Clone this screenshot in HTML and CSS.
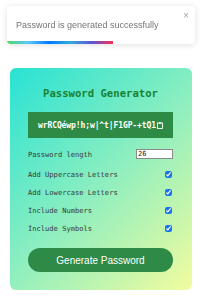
FILE: index.html
```html
<!DOCTYPE html>
<html>
<head>
<meta charset="utf-8">
<link rel="stylesheet" href="styles.css">
</head>
<body>
<div class="toast">
  <span class="toast-text">Password is generated successfully</span>
  <span class="toast-close">×</span>
  <div class="toast-progress"></div>
</div>
<main class="card">
  <h1 class="title">Password Generator</h1>
  <div class="pw-box">
    <span class="pw-text">wrRCQéwp!h;w|^t|F1GP-+tQ1</span>
    <svg class="clip" width="6" height="7" viewBox="0 0 6 7"><rect x="0.5" y="1" width="5" height="5.5" fill="none" stroke="#fff" stroke-width="0.9"/><rect x="1.8" y="0.3" width="2.4" height="1.4" fill="#fff"/></svg>
  </div>
  <div class="row row-first">
    <label class="label">Password length</label>
    <input class="num" type="text" value="26">
  </div>
  <div class="row">
    <label class="label">Add Uppercase Letters</label>
    <input class="check" type="checkbox" checked>
  </div>
  <div class="row">
    <label class="label">Add Lowercase Letters</label>
    <input class="check" type="checkbox" checked>
  </div>
  <div class="row">
    <label class="label">Include Numbers</label>
    <input class="check" type="checkbox" checked>
  </div>
  <div class="row">
    <label class="label">Include Symbols</label>
    <input class="check" type="checkbox" checked>
  </div>
  <button class="btn">Generate Password</button>
</main>
</body>
</html>
```
FILE: styles.css
```css
html, body {
  margin: 0;
  padding: 0;
  background: #fff;
}
body {
  width: 205px;
  height: 300px;
  overflow: hidden;
  font-family: "Liberation Sans", Arial, sans-serif;
}
.toast {
  position: fixed;
  top: 6px;
  left: 7px;
  width: 188px;
  height: 38px;
  background: #fff;
  border-radius: 4px;
  box-shadow: 0 1px 6px rgba(0,0,0,0.13);
  display: flex;
  align-items: center;
  overflow: hidden;
  z-index: 10;
}
.toast-text {
  margin-left: 9px;
  font-size: 9px;
  color: #757575;
  line-height: 11px;
}
.toast-close {
  position: absolute;
  top: 5px;
  right: 6px;
  font-size: 10px;
  line-height: 10px;
  color: #a8a8a8;
}
.toast-progress {
  position: absolute;
  left: 0;
  bottom: 0;
  width: 106px;
  height: 3px;
  background: linear-gradient(to right, #4cd964, #5ac8fa, #007aff, #34aadc, #5856d6, #ff2d55);
}
.card {
  margin: 68px 0 0 10px;
  width: 182px;
  height: 222px;
  box-sizing: border-box;
  padding: 19px 19px 0 18px;
  border-radius: 6px;
  background: linear-gradient(135deg, #28e2d4 0%, #8beec0 50%, #f2fc9f 100%);
  display: flex;
  flex-direction: column;
}
.title {
  margin: 0;
  text-align: center;
  font-family: "DejaVu Sans Mono", monospace;
  font-size: 10.6px;
  line-height: 13px;
  font-weight: bold;
  color: #1a8232;
}
.pw-box {
  margin-top: 12px;
  height: 26px;
  background: #2e8b45;
  display: flex;
  align-items: center;
  justify-content: center;
  gap: 1px;
}
.pw-text {
  font-family: "DejaVu Sans Mono", monospace;
  font-size: 8px;
  font-weight: bold;
  color: #fff;
  letter-spacing: -0.1px;
}
.clip {
  display: block;
}
.row {
  height: 18px;
  display: flex;
  align-items: center;
  justify-content: space-between;
}
.row-first {
  margin-top: 7px;
  margin-bottom: 2px;
}
.label {
  font-family: "DejaVu Sans Mono", monospace;
  font-size: 7.1px;
  color: #3a3a3a;
}
.num {
  width: 37px;
  height: 10px;
  box-sizing: border-box;
  margin: 0;
  padding: 0 1px;
  border: 1px solid #8a8a8a;
  font-family: "DejaVu Sans Mono", monospace;
  font-size: 7px;
  color: #222;
  background: #fff;
  outline: none;
}
.check {
  width: 7px;
  height: 7px;
  margin: 0 1px 0 0;
  accent-color: #1a73e8;
}
.btn {
  margin-top: 11px;
  height: 24px;
  border: none;
  border-radius: 12px;
  background: #2e8b47;
  color: #fff;
  font-family: "Liberation Sans", Arial, sans-serif;
  font-size: 10px;
  padding: 0;
}
```
